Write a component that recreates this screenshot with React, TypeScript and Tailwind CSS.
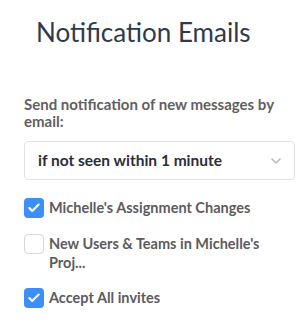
import { ChevronDown, Check } from "lucide-react";

function Box({ checked }: { checked: boolean }) {
  return checked ? (
    <span className="flex h-5 w-5 shrink-0 items-center justify-center rounded-[4px] bg-[#3d8ef7]">
      <Check className="h-3.5 w-3.5 text-white" strokeWidth={3.5} />
    </span>
  ) : (
    <span className="h-5 w-5 shrink-0 rounded-[4px] border border-[#d6d8e0] bg-white" />
  );
}

export default function App() {
  const items = [
    { label: "Michelle's Assignment Changes", checked: true },
    { label: "New Users & Teams in Michelle's Proj...", checked: false },
    { label: "Accept All invites", checked: true },
  ];
  return (
    <div className="min-h-[335px] w-[304px] bg-white pl-6 pr-[9px] pt-[16px] font-['Lato',sans-serif]">
      <h1 className="pl-3 text-[26px] leading-[32px] text-[#2f3a4d]">Notification Emails</h1>
      <p className="mt-[48px] text-[15px] font-bold leading-[17px] text-[#5f5f63]">
        Send notification of new messages by email:
      </p>
      <div className="mt-[11px] flex h-[39px] items-center justify-between rounded-[4px] border border-[#e1e2e8] pl-[13px] pr-[10px]">
        <span className="text-[15.5px] font-bold text-[#2c2d3a]">if not seen within 1 minute</span>
        <ChevronDown className="h-4 w-4 text-[#b3bccb]" strokeWidth={2.5} />
      </div>
      <div className="mt-[18px] flex flex-col gap-[16px]">
        {items.map((it) => (
          <label key={it.label} className="flex items-start gap-[5px]">
            <Box checked={it.checked} />
            <span className="w-[230px] text-[14.5px] font-bold leading-[19px] text-[#5b5b60]">{it.label}</span>
          </label>
        ))}
      </div>
    </div>
  );
}
